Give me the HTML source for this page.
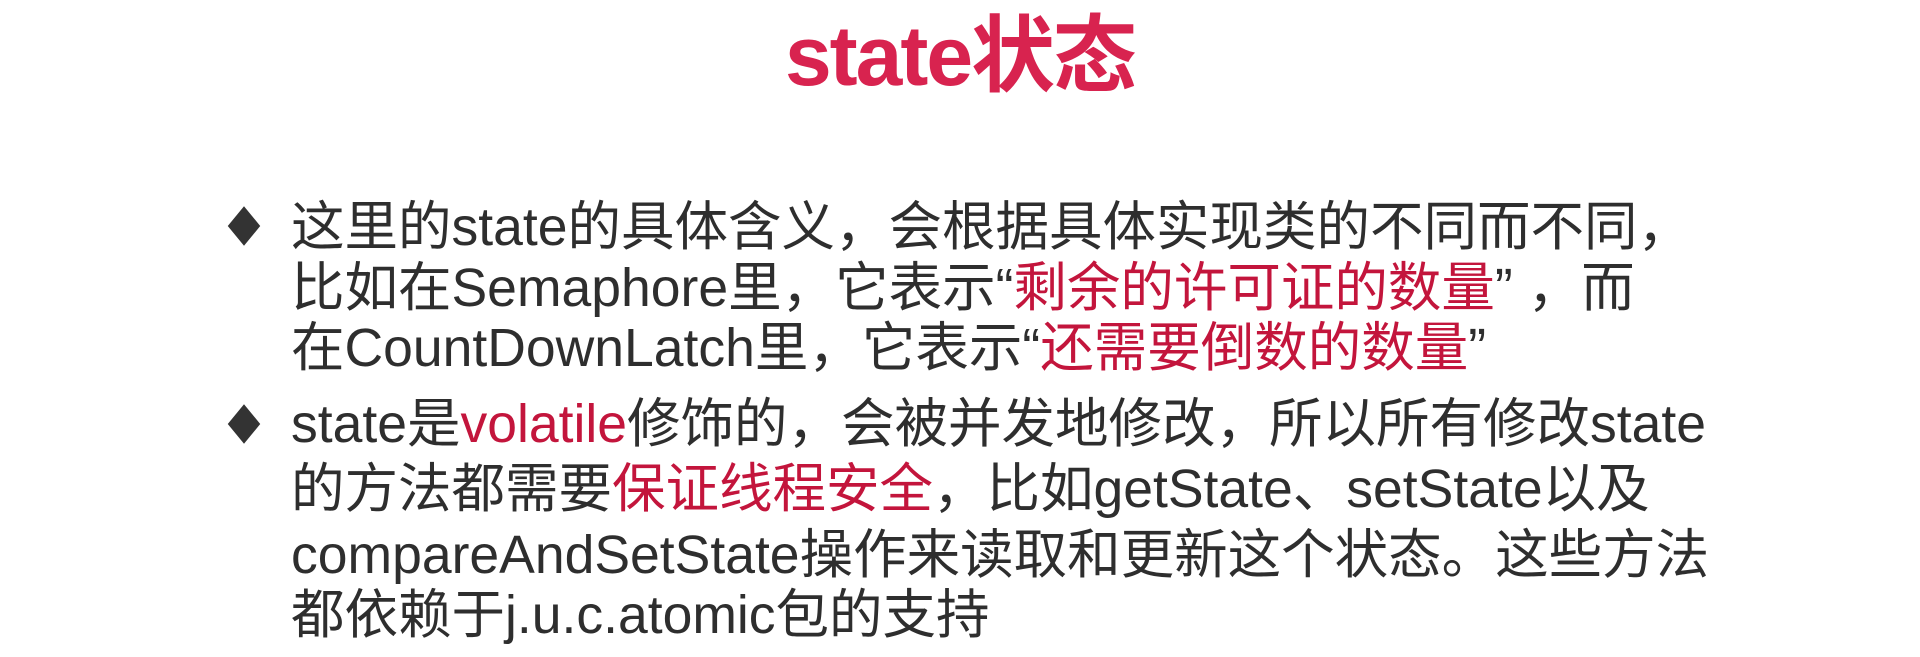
<!DOCTYPE html>
<html><head><meta charset="utf-8"><style>
html,body{margin:0;padding:0;background:#fff;width:1920px;height:657px;overflow:hidden}
body{position:relative;font-family:"Liberation Sans","Noto Sans CJK SC",sans-serif;color:#2e2e2e}
.t{position:absolute;left:0;width:1920px;text-align:center;top:8px;font-size:84px;font-weight:bold;color:#d8234f;line-height:96px;letter-spacing:-2px}
.l{position:absolute;left:291px;font-size:53.5px;line-height:60px;white-space:nowrap}
.r{color:#c3153c}
.b{position:absolute;left:230px;width:28px;height:28px;background:#333;transform:scaleX(0.82) rotate(45deg)}
</style></head><body>
<div class="t">state状态</div>
<div class="b" style="top:212px"></div>
<div class="l" style="top:198px">这里的state的具体含义，会根据具体实现类的不同而不同，</div>
<div class="l" style="top:259px">比如在Semaphore里，它表示“<span class="r">剩余的许可证的数量</span>” ，而</div>
<div class="l" style="top:319px">在CountDownLatch里，它表示“<span class="r">还需要倒数的数量</span>”</div>
<div class="b" style="top:410px"></div>
<div class="l" style="top:395px">state是<span class="r">volatile</span>修饰的，会被并发地修改，所以所有修改state</div>
<div class="l" style="top:460px">的方法都需要<span class="r">保证线程安全</span>，比如getState、setState以及</div>
<div class="l" style="top:526px">compareAndSetState操作来读取和更新这个状态。这些方法</div>
<div class="l" style="top:586px">都依赖于j.u.c.atomic包的支持</div>
</body></html>
